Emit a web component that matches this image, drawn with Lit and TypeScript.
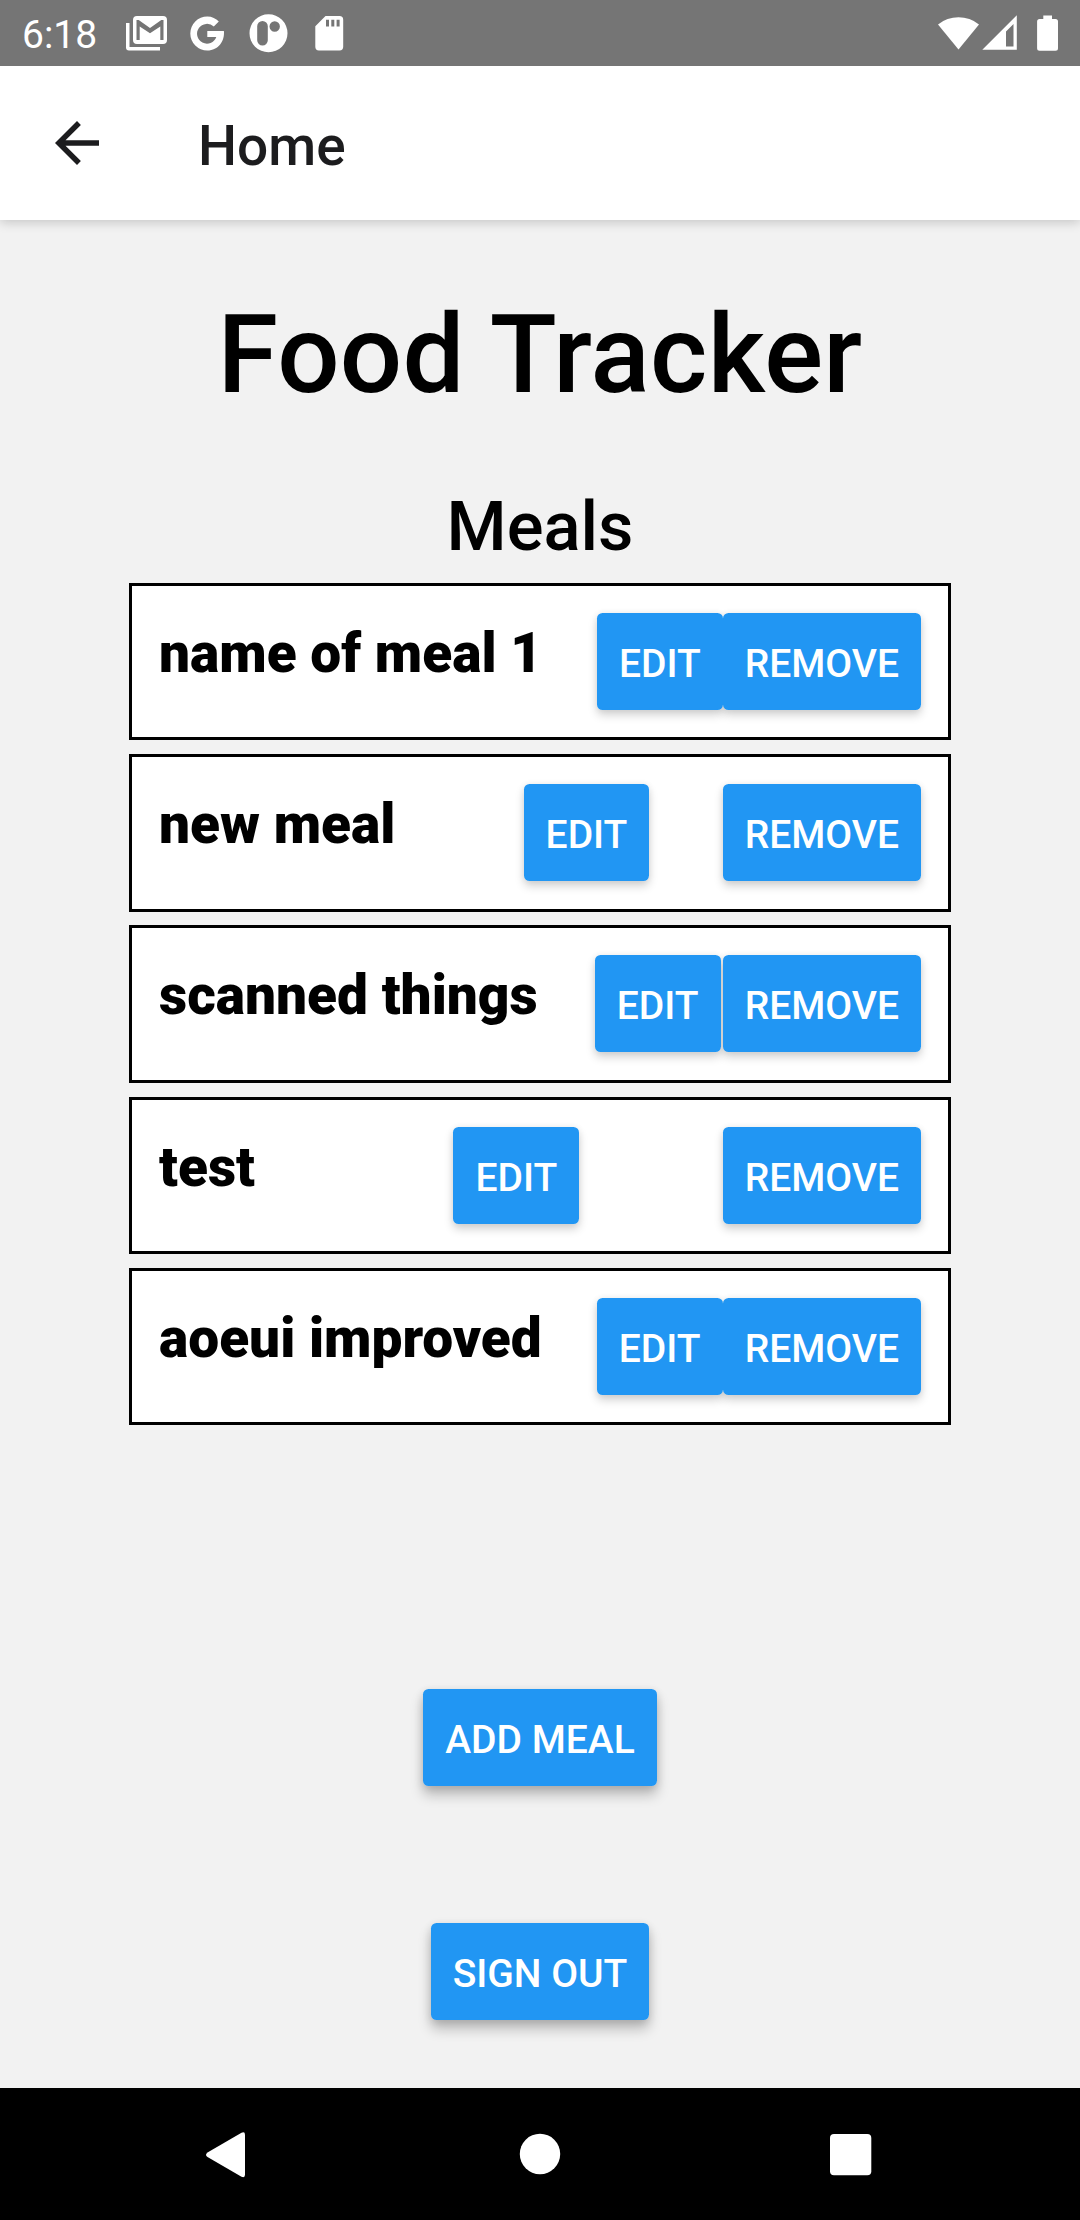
import { LitElement, html, css } from "lit";
import { customElement, property } from "lit/decorators.js";

@customElement("material-button")
class MaterialButton extends LitElement {
  @property() label = "";
  @property({ type: Boolean, reflect: true }) raised = false;

  static styles = css`
    :host {
      display: block;
      flex: none;
    }
    .button {
      display: block;
      position: relative;
      box-sizing: border-box;
      height: 97px;
      margin: 0;
      padding: 6px 22px 0;
      border: 0;
      border-radius: 5.5px;
      background: #2196f3;
      color: #fff;
      font: 500 39px/91px Roboto, "Liberation Sans", sans-serif;
      white-space: nowrap;
    }
    /* The shadow sits below every button face, so neighbours never darken each other. */
    .button::before {
      content: "";
      position: absolute;
      z-index: -1;
      inset: 0;
      border-radius: 5.5px;
      box-shadow: 0 5px 10px rgba(0, 0, 0, 0.18), 0 0 7px rgba(0, 0, 0, 0.06);
    }
    :host([raised]) .button::before {
      box-shadow: 0 9px 13px rgba(0, 0, 0, 0.23), 0 2px 9px rgba(0, 0, 0, 0.12);
    }
  `;

  render() {
    return html`<button class="button">${this.label}</button>`;
  }
}

@customElement("meal-card")
class MealCard extends LitElement {
  @property() name = "";

  static styles = css`
    :host {
      display: flex;
      justify-content: space-between;
      align-items: flex-start;
      isolation: isolate;
      box-sizing: border-box;
      width: 822px;
      height: 157.4px;
      padding: 27px;
      border: 3px solid #000;
      background: #fff;
    }
    .name {
      flex: 0 1 auto;
      min-width: 0;
      margin: 8px 0 0;
      padding-right: 55px;
      color: #000;
      font: 900 55px/64px Roboto, "Liberation Sans", sans-serif;
      white-space: nowrap;
    }
  `;

  render() {
    return html`
      <h3 class="name">${this.name}</h3>
      <material-button label="EDIT"></material-button>
      <material-button label="REMOVE"></material-button>
    `;
  }
}

@customElement("app-root")
class AppRoot extends LitElement {
  meals = ["name of meal 1", "new meal", "scanned things", "test", "aoeui improved"];

  static styles = css`
    :host {
      display: flex;
      flex-direction: column;
      isolation: isolate;
      width: 1080px;
      height: 2220px;
      overflow: hidden;
      background: #f2f2f2;
      font-family: Roboto, "Liberation Sans", sans-serif;
    }
    svg {
      display: block;
      flex: none;
    }
    .status {
      display: flex;
      position: relative;
      flex: none;
      justify-content: space-between;
      height: 66px;
      background: #757575;
      color: #fff;
    }
    .clock {
      width: 104px;
      padding-left: 22px;
      font-size: 39px;
      line-height: 70px;
    }
    .appbar {
      display: flex;
      flex: none;
      align-items: center;
      height: 154px;
      background: #fff;
      color: #1c1c1e;
      box-shadow: 0 2px 11px rgba(0, 0, 0, 0.2);
    }
    .back {
      margin-left: 44px;
    }
    .title {
      margin: 6px 0 0 88px;
      font-size: 55px;
      font-weight: 500;
      line-height: 64px;
    }
    .content {
      display: flex;
      flex: 1;
      flex-direction: column;
      align-items: center;
      color: #000;
    }
    .heading {
      margin: 70px 0 0;
      font-size: 110px;
      font-weight: 500;
      line-height: 130px;
      letter-spacing: 0.25px;
    }
    .subheading {
      margin: 67px 0 0;
      font-size: 68.75px;
      font-weight: 500;
      line-height: 80px;
    }
    .meals {
      display: flex;
      flex-direction: column;
      gap: 13.8px;
      margin-top: 16px;
    }
    .add {
      margin-top: 264px;
    }
    .signout {
      margin-top: 137px;
    }
    .navbar {
      height: 132px;
      background: #000;
    }
  `;

  render() {
    return html`
      <div class="status">
        <div class="clock">6:18</div>
        <svg width="776" height="66" viewBox="126 0 776 66" fill="#fff">
          <path d="M126 23h3.500v24h30.500v3.500h-31q-3 0-3-3z" />
          <path fill-rule="evenodd" d="M137 16h26q4 0 4 4v20q0 4-4 4h-26q-4 0-4-4v-20q0-4 4-4zM136.500 20v20h3.200V26.500l10.300 6.800 10.300-6.800V40h3.200V20h-2.200l-11.300 8-11.300-8z" />
          <path d="M218.800 21.600L213.800 26.600A9.900 9.900 0 1 0 216.300 37H207.300V31H223.900C224.900 41 218.500 50.500 207.300 50.500A17 17 0 1 1 207.300 16.500C212 16.500 216 18.500 218.800 21.600z" />
          <path fill-rule="evenodd" d="M268.500 14.300a19 19 0 1 1 0 38 19 19 0 0 1 0-38zM262.500 21a5.300 5.300 0 0 0-5.300 5.300v14a5.300 5.300 0 0 0 10.600 0v-14a5.300 5.300 0 0 0-5.300-5.300zM274.700 21.300a5.200 5.200 0 1 0 0 10.400 5.200 5.200 0 0 0 0-10.400z" />
          <path fill-rule="evenodd" d="M325.500 16h14q3.700 0 3.700 3.700v27q0 3.700-3.700 3.700h-20.500q-3.700 0-3.700-3.700V26.200zM326 19.700v6.800h3v-6.800zM331.300 19.700v6.800h3v-6.800zM336.600 19.700v6.800h3v-6.800z" />
        </svg>
        <svg width="178" height="66" viewBox="902 0 178 66" fill="#fff">
          <path d="M938 24.500a32.500 32.500 0 0 1 41 0l-20.500 25z" />
          <path fill-rule="evenodd" d="M1016.800 15.300v34.500h-34.500zM1013.500 24l-7.500 7.500v15h7.500z" />
          <path d="M1043.300 15.500h8.700v3.500h3.500q2.500 0 2.500 2.500v26.800q0 2.500-2.500 2.500h-15.900q-2.500 0-2.500-2.500V21.500q0-2.500 2.500-2.500h3.700z" />
        </svg>
      </div>
      <div class="appbar">
        <svg class="back" width="66" height="66" viewBox="0 0 24 24" fill="#1c1c1e">
          <path d="M20 11H7.830l5.590-5.590L12 4l-8 8 8 8 1.410-1.410L7.830 13H20v-2z" />
        </svg>
        <div class="title">Home</div>
      </div>
      <div class="content">
        <h1 class="heading">Food Tracker</h1>
        <h2 class="subheading">Meals</h2>
        <div class="meals">${this.meals.map((m) => html`<meal-card .name=${m}></meal-card>`)}</div>
        <material-button class="add" raised label="ADD MEAL"></material-button>
        <material-button class="signout" raised label="SIGN OUT"></material-button>
      </div>
      <svg class="navbar" width="1080" height="132" viewBox="0 0 1080 132" fill="#fff">
        <path d="M207.500 64.500 241.500 44.800q3.500-1.500 3.500 2v40q0 3.500-3.500 2L207.500 69q-3-2.200 0-4.500z" />
        <circle cx="540" cy="66" r="20.200" />
        <rect x="830" y="46" width="41.300" height="41.300" rx="4" />
      </svg>
    `;
  }
}
